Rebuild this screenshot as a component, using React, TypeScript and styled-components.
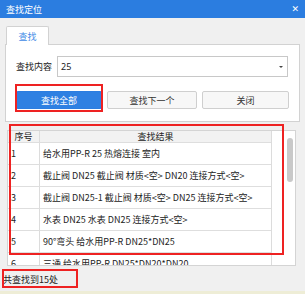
import React from 'react';
import styled, { createGlobalStyle } from 'styled-components';

const GlobalStyle = createGlobalStyle`
  html, body { margin: 0; padding: 0; background: #f0f0f0; }
  * { box-sizing: border-box; }
`;

const Window = styled.div`
  position: relative;
  width: 305px;
  height: 294px;
  display: flex;
  flex-direction: column;
  background: #f0f0f0;
  font-family: "Noto Sans CJK SC", "Noto Sans", sans-serif;
  font-size: 9px;
  color: #222;
  overflow: hidden;
`;

const TitleBar = styled.div`
  height: 18px;
  flex: none;
  display: flex;
  align-items: center;
  justify-content: space-between;
  padding: 0 6px;
  background: #2b7de0;
  color: #fff;
`;

const Close = styled.span`
  font-family: "DejaVu Sans", sans-serif;
  font-size: 9px;
  font-weight: bold;
  line-height: 1;
`;

const Body = styled.div`
  flex: 1;
  display: flex;
  flex-direction: column;
  padding: 8px 0 0 0;
`;

const TabStrip = styled.div`
  display: flex;
  padding-left: 6px;
  height: 18px;
  position: relative;
  z-index: 1;
`;

const Tab = styled.div`
  width: 43px;
  height: 19px;
  display: flex;
  align-items: center;
  justify-content: center;
  background: #fff;
  border: 1px solid #d2d2d2;
  border-bottom: none;
  border-radius: 2px 2px 0 0;
  color: #3f8ae6;
`;

const TabPanel = styled.div`
  margin: 0 5px 0 5px;
  height: 78px;
  background: #fff;
  border: 1px solid #d2d2d2;
  padding: 11px 11px 0 10px;
  display: flex;
  flex-direction: column;
  gap: 14px;
`;

const FieldRow = styled.div`
  display: flex;
  align-items: center;
  height: 21px;
`;

const Label = styled.span`
  width: 41px;
  flex: none;
`;

const Combo = styled.div`
  flex: 1;
  height: 21px;
  border: 1px solid #c8c8c8;
  display: flex;
  align-items: center;
  justify-content: space-between;
  padding: 0 3px 0 3px;
  font-family: "Noto Sans", sans-serif;
  font-size: 9px;
`;

const Caret = styled.span`
  width: 0;
  height: 0;
  border-left: 2px solid transparent;
  border-right: 2px solid transparent;
  border-top: 2px solid #444;
  margin-right: 1px;
`;

const ButtonRow = styled.div`
  display: grid;
  grid-template-columns: 86px 90px 87px;
  column-gap: 5px;
  height: 18px;
`;

const Button = styled.div<{ $primary?: boolean }>`
  display: flex;
  align-items: center;
  justify-content: center;
  border-radius: 2px;
  border: 1px solid ${({ $primary }) => ($primary ? '#2b7de0' : '#cfcfcf')};
  background: ${({ $primary }) => ($primary ? '#2e80e2' : '#f7f7f7')};
  color: ${({ $primary }) => ($primary ? '#fff' : '#333')};
`;

const GridBox = styled.div`
  margin: 8px 9px 0 7px;
  height: 136px;
  background: #fff;
  border: 1px solid #d4d4d4;
  display: flex;
  overflow: hidden;
`;

const Table = styled.div`
  width: 264px;
  flex: none;
  display: flex;
  flex-direction: column;
  border-right: 1px solid #dcdcdc;
`;

const Row = styled.div<{ $head?: boolean }>`
  display: flex;
  flex: none;
  height: ${({ $head }) => ($head ? '12px' : '22px')};
  background: ${({ $head }) => ($head ? '#f2f2f2' : '#fff')};
  border-bottom: 1px solid #dedede;
`;

const Cell = styled.div<{ $w?: number; $center?: boolean }>`
  ${({ $w }) => ($w ? `width: ${$w}px; flex: none;` : 'flex: 1;')}
  display: flex;
  align-items: center;
  justify-content: ${({ $center }) => ($center ? 'center' : 'flex-start')};
  padding-left: ${({ $center }) => ($center ? '0' : '3px')};
  white-space: nowrap;
  overflow: hidden;
  & + & { border-left: 1px solid #dcdcdc; }
`;

const Filler = styled.div`
  flex: 1;
`;

const ScrollTrack = styled.div`
  width: 9px;
  flex: none;
  padding: 7px 2px 0 1px;
`;

const Thumb = styled.div`
  height: 44px;
  border-radius: 3px;
  background: #c9c9c9;
`;

const Status = styled.div`
  padding: 4px 0 0 3px;
  height: 22px;
  display: flex;
  align-items: center;
`;

const BottomEdge = styled.div`
  margin-top: auto;
  height: 3px;
  background: #eeedd6;
`;

const Mark = styled.div<{ $x: number; $y: number; $w: number; $h: number }>`
  position: absolute;
  left: ${({ $x }) => $x}px;
  top: ${({ $y }) => $y}px;
  width: ${({ $w }) => $w}px;
  height: ${({ $h }) => $h}px;
  border: 2px solid #ee2222;
  pointer-events: none;
`;

const rows = [
  '给水用PP-R 25 热熔连接 室内',
  '截止阀 DN25 截止阀 材质<空> DN20 连接方式<空>',
  '截止阀 DN25-1 截止阀 材质<空> DN25 连接方式<空>',
  '水表 DN25 水表 DN25 连接方式<空>',
  '90°弯头 给水用PP-R DN25*DN25',
  '三通 给水用PP-R DN25*DN20*DN20',
];

export default function App() {
  return (
    <Window>
      <GlobalStyle />
      <TitleBar>
        <span>查找定位</span>
        <Close>✕</Close>
      </TitleBar>
      <Body>
        <TabStrip>
          <Tab>查找</Tab>
        </TabStrip>
        <TabPanel>
          <FieldRow>
            <Label>查找内容</Label>
            <Combo>
              <span>25</span>
              <Caret />
            </Combo>
          </FieldRow>
          <ButtonRow>
            <Button $primary>查找全部</Button>
            <Button>查找下一个</Button>
            <Button>关闭</Button>
          </ButtonRow>
        </TabPanel>
        <GridBox>
          <Table>
            <Row $head>
              <Cell $w={31} $center>序号</Cell>
              <Cell $center>查找结果</Cell>
            </Row>
            {rows.map((text, i) => (
              <Row key={i}>
                <Cell $w={31}>{i + 1}</Cell>
                <Cell>{text}</Cell>
              </Row>
            ))}
          </Table>
          <Filler />
          <ScrollTrack>
            <Thumb />
          </ScrollTrack>
        </GridBox>
        <Status>共查找到15处</Status>
        <BottomEdge />
      </Body>
      <Mark $x={15} $y={84} $w={88} $h={28} />
      <Mark $x={9} $y={124} $w={275} $h={131} />
      <Mark $x={2} $y={269} $w={76} $h={19} />
    </Window>
  );
}
